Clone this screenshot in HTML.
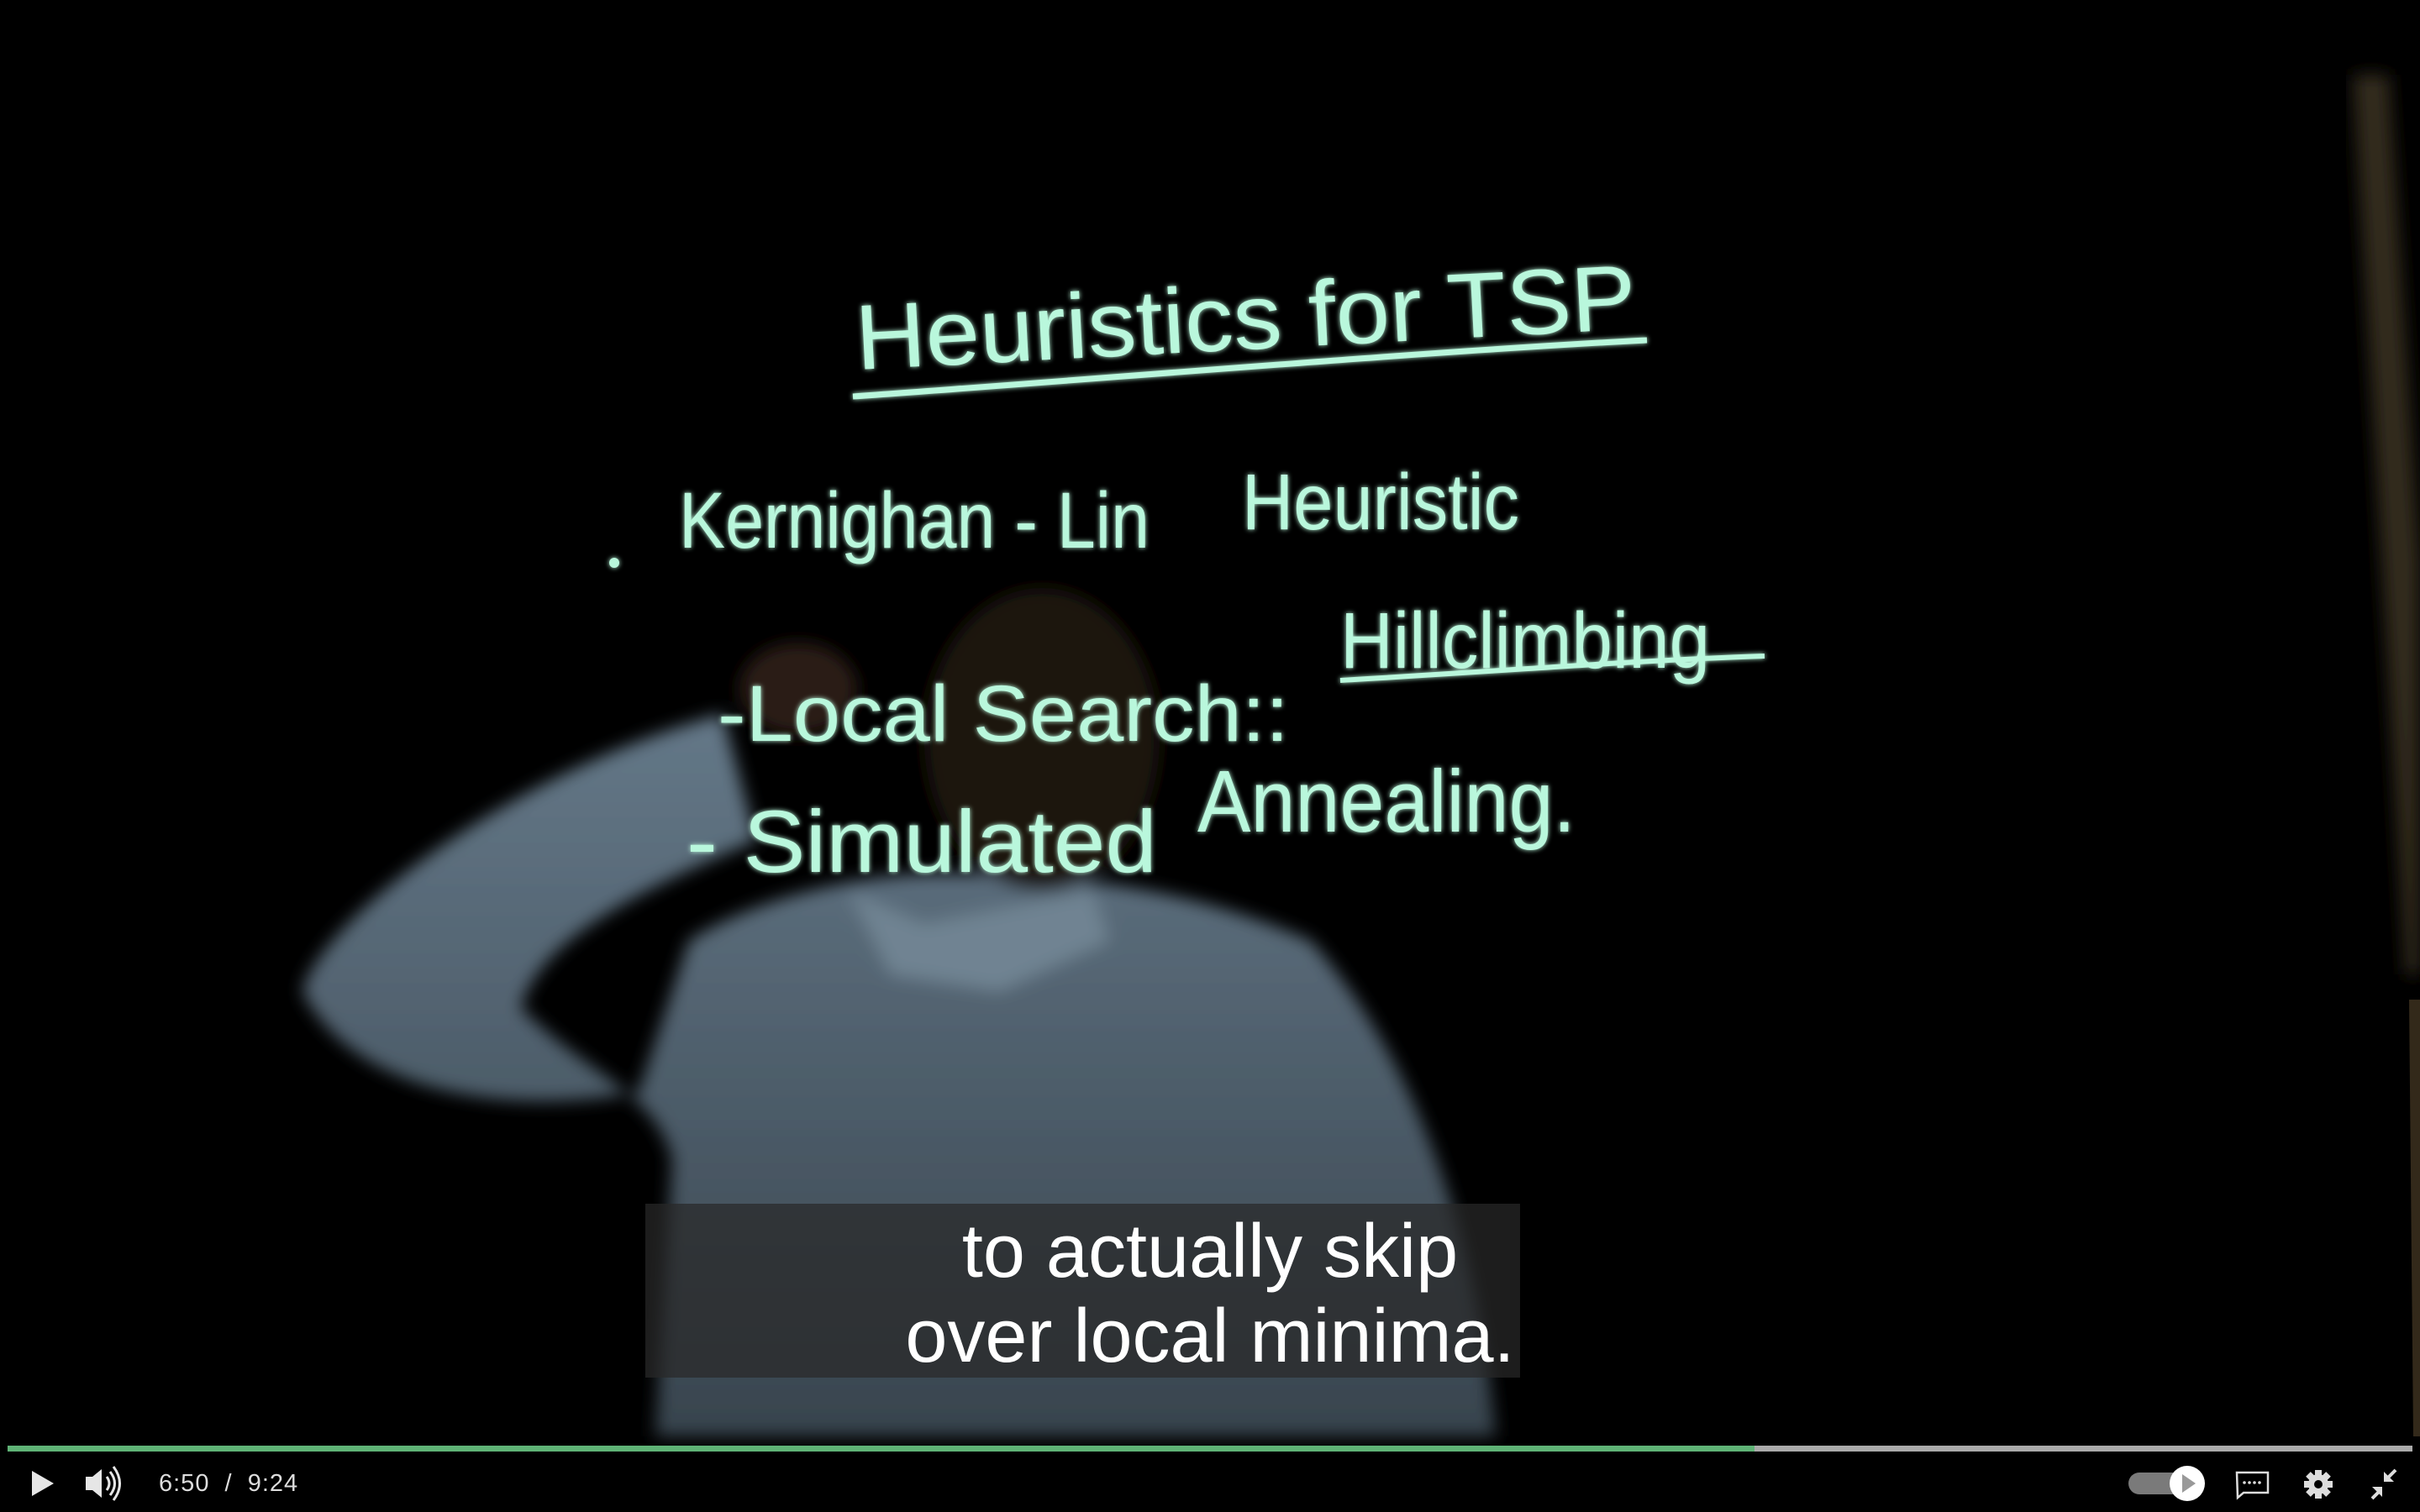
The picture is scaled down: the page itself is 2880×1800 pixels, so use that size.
<!DOCTYPE html>
<html><head><meta charset="utf-8">
<style>
html,body{margin:0;padding:0;background:#000;width:2880px;height:1800px;overflow:hidden}
body{position:relative;font-family:"Liberation Sans",sans-serif}
svg{position:absolute;left:0;top:0}
.sub{position:absolute;left:768px;top:1433px;width:1041px;height:207px;background:rgba(40,40,40,0.72);}
.sub div{position:absolute;left:152px;width:1040px;text-align:center;color:#fff;font-size:90px;line-height:1;white-space:nowrap}
.time{position:absolute;left:189px;top:1750px;color:#ddd;font-size:29px;letter-spacing:1px}
</style></head><body>
<svg width="2880" height="1800" viewBox="0 0 2880 1800">
<defs>
<filter id="b40"><feGaussianBlur stdDeviation="40"/></filter>
<filter id="b12"><feGaussianBlur stdDeviation="10"/></filter>
<filter id="glow"><feGaussianBlur stdDeviation="3" result="g"/><feMerge><feMergeNode in="g"/><feMergeNode in="SourceGraphic"/></feMerge></filter>
<linearGradient id="sh" x1="0" y1="0" x2="0" y2="1"><stop offset="0" stop-color="#647888"/><stop offset="1" stop-color="#38444e"/></linearGradient>
</defs>
<polygon points="2800,89 2843,89 2880,670 2880,1160 2863,1160" fill="#33291a" filter="url(#b12)"/>
<polygon points="2867,1190 2880,1190 2880,1710 2872,1710" fill="#33291a"/>
<g filter="url(#b12)">
<path d="M360,1180 C380,1100 600,920 860,850 L900,1000 C760,1060 640,1120 620,1200 C700,1280 780,1300 800,1380 L780,1710 L1780,1710 C1760,1500 1700,1280 1560,1120 C1400,1050 1250,1040 1120,1040 C1000,1040 880,1080 820,1120 L760,1300 C600,1330 420,1300 360,1180 Z" fill="url(#sh)"/>
<path d="M1010,1060 L1100,1100 L1200,1080 L1300,1060 L1320,1120 L1190,1180 L1060,1160 Z" fill="#6f8392"/>
<ellipse cx="1240" cy="880" rx="140" ry="180" fill="#1e130e"/>
<ellipse cx="950" cy="820" rx="70" ry="55" fill="#2a1a12"/>
</g>
<g fill="#b9f7dc" font-family="Liberation Sans, sans-serif" filter="url(#glow)">
<text x="1020" y="440" font-size="110" textLength="930" lengthAdjust="spacingAndGlyphs" transform="rotate(-3 1020 440)">Heuristics for TSP</text>
<path d="M1015,472 C1300,452 1700,418 1960,405" stroke="#b9f7dc" stroke-width="7" fill="none"/>
<circle cx="731" cy="670" r="6"/>
<text x="808" y="652" font-size="95" textLength="560" lengthAdjust="spacingAndGlyphs">Kernighan - Lin</text>
<text x="1478" y="630" font-size="95" textLength="330" lengthAdjust="spacingAndGlyphs">Heuristic</text>
<text x="854" y="882" font-size="95" textLength="680" lengthAdjust="spacingAndGlyphs">-Local Search::</text>
<text x="1595" y="795" font-size="95" textLength="440" lengthAdjust="spacingAndGlyphs">Hillclimbing</text>
<path d="M1595,810 C1800,798 1950,786 2100,781" stroke="#b9f7dc" stroke-width="6" fill="none"/>
<text x="817" y="1038" font-size="105" textLength="560" lengthAdjust="spacingAndGlyphs">- Simulated</text>
<text x="1425" y="990" font-size="105" textLength="450" lengthAdjust="spacingAndGlyphs">Annealing.</text>
</g>
<rect x="9" y="1721" width="2862" height="7" fill="#aaa"/>
<rect x="9" y="1721" width="2079" height="7" fill="#5fb376"/>
<path d="M38,1751 L64,1766 L38,1781 Z" fill="#e6e6e6"/>
<path d="M102,1758 L110,1758 L121,1749 L121,1783 L110,1774 L102,1774 Z" fill="#e6e6e6"/>
<path d="M127,1758 Q133,1766 127,1774 M131,1752 Q142,1766 131,1780 M135,1746 Q150,1766 135,1786" stroke="#e6e6e6" stroke-width="3" fill="none"/>
<rect x="2533" y="1753" width="80" height="26" rx="13" fill="#7a7a7a"/>
<circle cx="2603" cy="1766" r="21" fill="#fff"/>
<path d="M2597,1755 L2613,1766 L2597,1777 Z" fill="#999"/>
<path d="M2662,1753 L2699,1753 L2699,1777 L2670,1777 L2663,1783 Z" fill="none" stroke="#ddd" stroke-width="2.5"/>
<g fill="#ddd"><circle cx="2671" cy="1765" r="1.8"/><circle cx="2677" cy="1765" r="1.8"/><circle cx="2683" cy="1765" r="1.8"/><circle cx="2689" cy="1765" r="1.8"/></g>
<g fill="#ddd" transform="translate(2759,1767)">
<circle r="12"/>
<g><rect x="-4" y="-17" width="8" height="34"/><rect x="-4" y="-17" width="8" height="34" transform="rotate(45)"/><rect x="-4" y="-17" width="8" height="34" transform="rotate(90)"/><rect x="-4" y="-17" width="8" height="34" transform="rotate(135)"/></g>
<circle r="5" fill="#000"/>
</g>
<g stroke="#ddd" stroke-width="4" fill="none"><path d="M2851,1750 L2842,1759 M2823,1784 L2831,1776"/></g>
<path d="M2837,1764 L2837,1752 L2849,1764 Z" fill="#ddd"/>
<path d="M2835,1770 L2823,1770 L2835,1782 Z" fill="#ddd"/>
</svg>
<div class="sub">
<div style="top:12px">to actually skip</div>
<div style="top:113px">over local minima.</div>
</div>
<div class="time">6:50 &nbsp;/ &nbsp;9:24</div>
</body></html>
